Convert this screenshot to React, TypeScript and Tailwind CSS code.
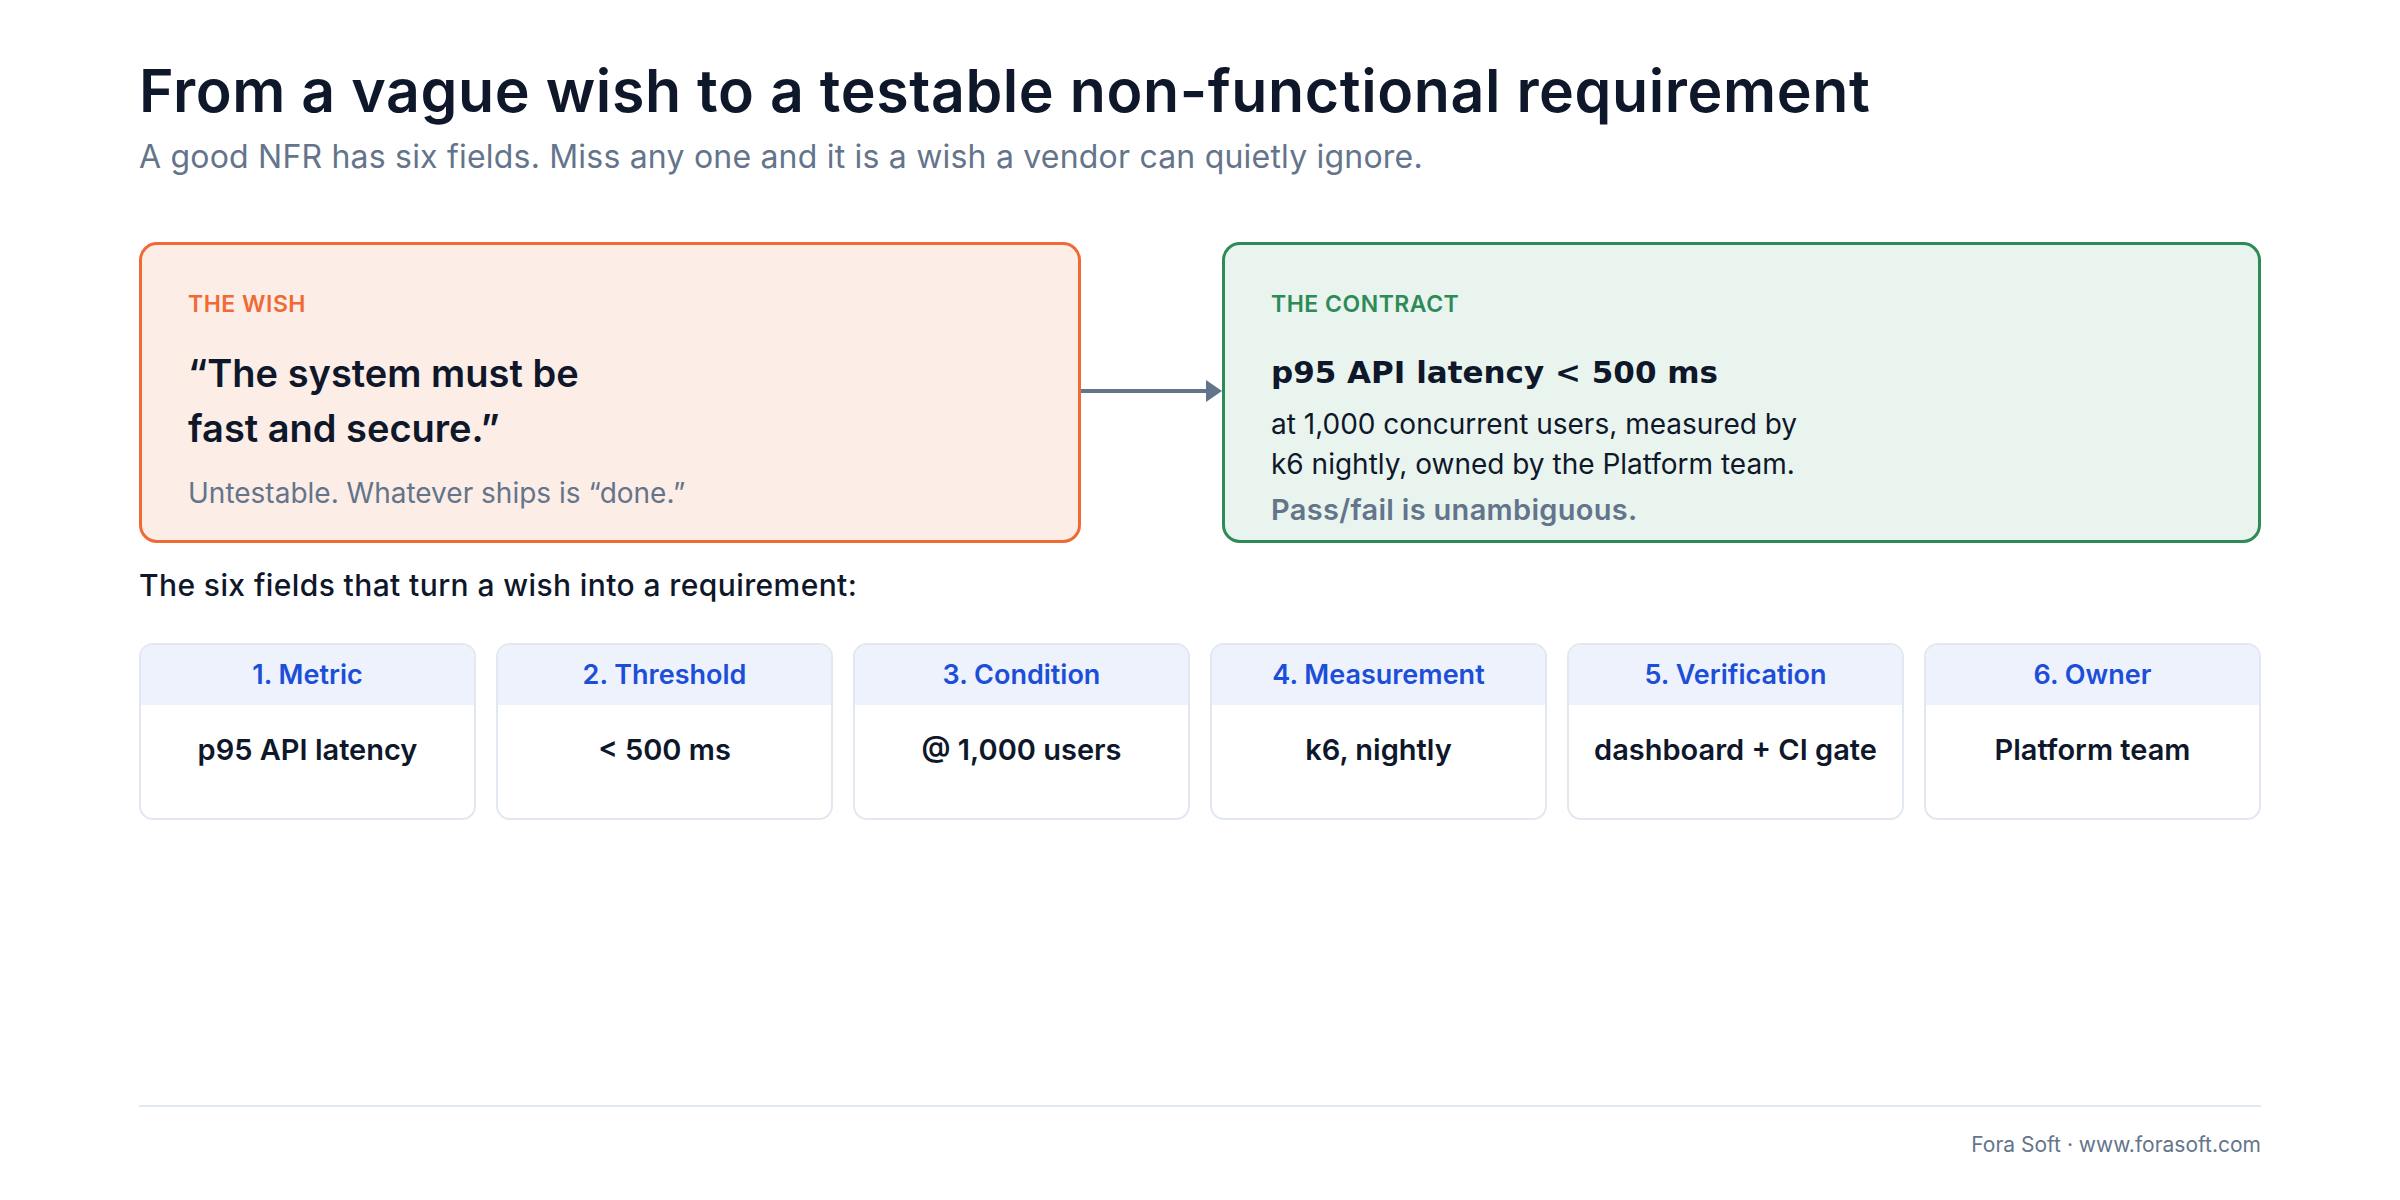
import React from "react";

const fields = [
  ["1. Metric", "p95 API latency"],
  ["2. Threshold", "< 500 ms"],
  ["3. Condition", "@ 1,000 users"],
  ["4. Measurement", "k6, nightly"],
  ["5. Verification", "dashboard + CI gate"],
  ["6. Owner", "Platform team"],
];

export default function App() {
  return (
    <div className="w-[2400px] h-[1200px] bg-white px-[139px] flex flex-col text-[#0f172a]" style={{ fontFamily: "Inter, 'Noto Sans', sans-serif" }}>
      <h1 className="mt-[56px] text-[59px] leading-[70px] font-semibold tracking-[0.6px]">From a vague wish to a testable non-functional requirement</h1>
      <p className="mt-[10px] text-[32px] leading-[42px] text-[#64748b] tracking-[0.2px]">A good NFR has six fields. Miss any one and it is a wish a vendor can quietly ignore.</p>

      <div className="mt-[64px] flex items-stretch h-[301px]">
        <div className="w-[942px] shrink-0 rounded-[18px] border-[3px] border-[#ef6a35] bg-[#fcede6] px-[46px] pt-[45px]">
          <div className="text-[23px] font-semibold text-[#ef6a35] tracking-[0.5px] leading-[28px]">THE WISH</div>
          <div className="mt-[28px] text-[38px] font-semibold leading-[55px]">“The system must be<br />fast and secure.”</div>
          <div className="mt-[19px] text-[28px] leading-[36px] text-[#64748b]">Untestable. Whatever ships is “done.”</div>
        </div>
        <div className="flex-1 flex items-start pt-[147px]">
          <div className="flex-1 h-[4px] bg-[#64748b]" />
          <svg width="16" height="22" viewBox="0 0 16 22" className="-mt-[9px]"><path d="M0 0 L16 11 L0 22 Z" fill="#64748b" /></svg>
        </div>
        <div className="w-[1039px] shrink-0 rounded-[18px] border-[3px] border-[#2e8a57] bg-[#e9f4ee] px-[46px] pt-[45px]">
          <div className="text-[23px] font-semibold text-[#2e8a57] tracking-[0.5px] leading-[28px]">THE CONTRACT</div>
          <div className="mt-[34px] text-[31px] font-bold leading-[40px]" style={{ fontFamily: "'DejaVu Sans', sans-serif" }}>p95 API latency &lt; 500 ms</div>
          <div className="mt-[12px] text-[28px] leading-[40px]">at 1,000 concurrent users, measured by<br />k6 nightly, owned by the Platform team.</div>
          <div className="mt-[8px] text-[29px] font-semibold leading-[36px] text-[#64748b] tracking-[0.3px]">Pass/fail is unambiguous.</div>
        </div>
      </div>

      <div className="mt-[24px] text-[30px] font-medium leading-[36px] tracking-[0.4px]">The six fields that turn a wish into a requirement:</div>

      <div className="mt-[40px] grid grid-cols-6 gap-[20px]">
        {fields.map(([h, v]) => (
          <div key={h} className="h-[177px] rounded-[14px] border-[2px] border-[#e2e8f0] overflow-hidden flex flex-col">
            <div className="h-[60px] bg-[#edf2fd] flex items-center justify-center text-[27px] font-semibold text-[#1d4ed8]">{h}</div>
            <div className="h-[90px] flex items-center justify-center text-[29px] font-semibold">{v}</div>
          </div>
        ))}
      </div>

      <div className="mt-auto mb-[40px]">
        <div className="h-[2px] bg-[#e2e8f0]" />
        <div className="mt-[22px] text-right text-[21px] text-[#64748b]">Fora Soft · www.forasoft.com</div>
      </div>
    </div>
  );
}
